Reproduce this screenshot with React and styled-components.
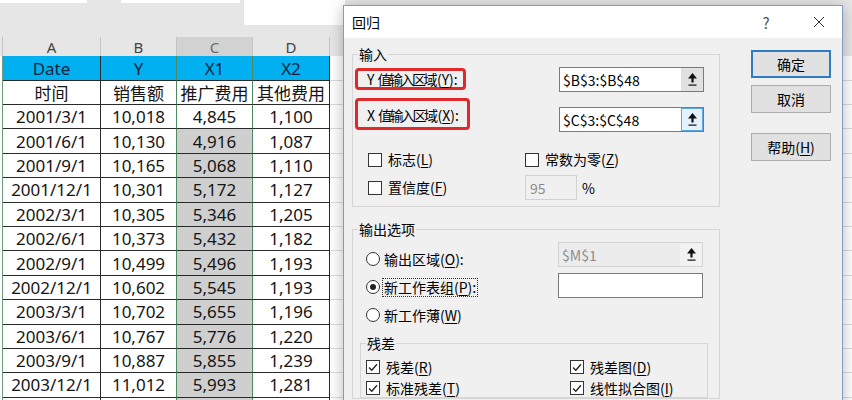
import styled, { createGlobalStyle } from "styled-components";

const GlobalStyle = createGlobalStyle`
  * { box-sizing: border-box; }
  html, body { margin: 0; padding: 0; }
  body {
    width: 852px;
    height: 400px;
    overflow: hidden;
    background: #fff;
    font-family: "Noto Sans", "Noto Sans CJK SC", sans-serif;
  }
  #root { width: 852px; height: 400px; overflow: hidden; }
`;

const Screen = styled.div`
  position: relative;
  width: 852px;
  height: 400px;
  overflow: hidden;
  background: #fff;
`;

/* ---------- spreadsheet behind the dialog ---------- */

const TopStrip = styled.div`
  display: flex;
  align-items: flex-start;
  height: 37px;
  background: #e6e6e6;
`;

const TopBox = styled.div`
  width: ${p => p.$w}px;
  height: ${p => p.$h}px;
  margin-left: ${p => p.$ml || 0}px;
  background: #fff;
`;

const Grid = styled.div`
  display: grid;
  grid-template-columns: 3px 98px 76px 76px 77px 1fr;
  grid-template-rows: 19px 25px 24px repeat(13, 24.4px);
`;

const Stub = styled.div`
  background: ${p => (p.$head ? "#e6e6e6" : "#fff")};
  border-right: 1px solid ${p => (p.$head ? "#c4c4c4" : "#6f9c7e")};
`;

const ColHead = styled.div`
  display: flex;
  align-items: center;
  justify-content: center;
  background: ${p => (p.$sel ? "#d2d2d2" : "#e6e6e6")};
  border-right: 1px solid #c4c4c4;
  color: ${p => (p.$sel ? "#6a6a6a" : "#444")};
  font-size: 15px;
`;

const Cell = styled.div`
  display: flex;
  align-items: center;
  justify-content: center;
  white-space: nowrap;
  font-size: 17px;
  background: ${p =>
    p.$tone === "blue" ? "#00b0f0" : p.$tone === "sel" ? "#cfcfcf" : "#fff"};
  color: ${p => (p.$tone === "blue" ? "#102440" : "#151515")};
  border-right: 1px solid ${p => (p.$edge ? "#4d8a63" : "#2a2a2a")};
  border-bottom: 1px solid #2a2a2a;
`;

const Blank = styled.div`
  background: ${p => (p.$head ? "#e6e6e6" : "#fff")};
  border-bottom: 1px solid ${p => (p.$head ? "#e6e6e6" : "#dadada")};
`;

const rows = [
  ["2001/3/1", "10,018", "4,845", "1,100"],
  ["2001/6/1", "10,130", "4,916", "1,087"],
  ["2001/9/1", "10,165", "5,068", "1,110"],
  ["2001/12/1", "10,301", "5,172", "1,127"],
  ["2002/3/1", "10,305", "5,346", "1,205"],
  ["2002/6/1", "10,373", "5,432", "1,182"],
  ["2002/9/1", "10,499", "5,496", "1,193"],
  ["2002/12/1", "10,602", "5,545", "1,193"],
  ["2003/3/1", "10,702", "5,655", "1,196"],
  ["2003/6/1", "10,767", "5,776", "1,220"],
  ["2003/9/1", "10,887", "5,855", "1,239"],
  ["2003/12/1", "11,012", "5,993", "1,281"],
  ["", "", "", ""],
];

const SheetRow = ({ cells, tone, first }) => (
  <>
    <Stub />
    <Cell $tone={tone}>{cells[0]}</Cell>
    <Cell $tone={tone} $edge>{cells[1]}</Cell>
    <Cell $tone={tone === "blue" || first ? tone : "sel"} $edge>{cells[2]}</Cell>
    <Cell $tone={tone}>{cells[3]}</Cell>
    <Blank />
  </>
);

/* ---------- regression dialog ---------- */

const Dialog = styled.div`
  position: absolute;
  left: 343px;
  top: 5px;
  width: 500px;
  height: 430px;
  display: flex;
  flex-direction: column;
  border: 1px solid #7f9cc4;
  background: #f0f0f0;
  box-shadow: 0 2px 14px rgba(0, 0, 0, 0.28);
  font-family: "Noto Sans CJK SC", "Noto Sans", sans-serif;
  font-size: 14px;
  color: #000;
`;

const TitleBar = styled.div`
  display: flex;
  align-items: center;
  height: 32px;
  padding-left: 8px;
  background: #fff;
  flex: none;
`;

const Title = styled.span`
  flex: 1;
`;

const TitleBtn = styled.div`
  width: ${p => p.$w}px;
  height: 32px;
  margin-right: ${p => p.$mr || 0}px;
  display: flex;
  align-items: center;
  justify-content: center;
  color: #555;
  font-size: 15px;
`;

const Body = styled.div`
  flex: 1;
  display: flex;
  padding: 0 11px 0 8px;
`;

const LeftPane = styled.div`
  width: 368px;
  display: flex;
  flex-direction: column;
`;

const Group = styled.fieldset`
  width: ${p => p.$w}px;
  margin: ${p => p.$mt || 0}px 0 0 ${p => p.$ml || 0}px;
  padding: 0;
  min-width: 0;
  border: 1px solid #d6d6d6;
`;

const Legend = styled.legend`
  margin-left: 5px;
  padding: 0 1px;
  line-height: 18px;
  font-size: 14px;
`;

const InputArea = styled.div`
  padding: 4px 15px 6px 2px;
  display: flex;
  flex-direction: column;
`;

const InputRow = styled.div`
  display: flex;
  align-items: flex-start;
  justify-content: space-between;
  margin-top: ${p => p.$mt || 0}px;
`;

const Marked = styled.div`
  display: flex;
  align-items: center;
  width: ${p => p.$w}px;
  height: ${p => p.$h}px;
  margin-top: ${p => p.$mt || 0}px;
  padding: ${p => p.$pt || 0}px 0 0 9px;
  border: 3px solid #e0292b;
  border-radius: 4px;
  white-space: nowrap;
`;

const Squeeze = styled.span`
  margin-left: 3px;
  letter-spacing: -2.5px;
  margin-right: 2px;
`;

const RefBox = styled.div`
  display: flex;
  width: 145px;
  height: 25px;
  margin-top: ${p => p.$mt || 0}px;
  border: 1px solid ${p => (p.$off ? "#d2d2d2" : "#7a7a7a")};
  background: ${p => (p.$off ? "#ececec" : "#fff")};
`;

const RefText = styled.span`
  flex: 1;
  display: flex;
  align-items: center;
  padding-left: 3px;
  color: ${p => (p.$off ? "#8c8c8c" : "#000")};
`;

const RefBtn = styled.span`
  width: 22px;
  display: flex;
  align-items: center;
  justify-content: center;
  background: ${p => (p.$hot ? "#e5f1fb" : p.$off ? "#f2f2f2" : "#e1e1e1")};
  border: 1px solid ${p => (p.$hot ? "#5aa6e6" : "transparent")};
`;

const CheckGrid = styled.div`
  display: grid;
  grid-template-columns: ${p => p.$col}px auto;
  grid-auto-rows: ${p => p.$row}px;
  row-gap: 3px;
  margin-top: ${p => p.$mt || 0}px;
  padding-left: ${p => p.$pl}px;
`;

const Option = styled.div`
  display: flex;
  align-items: center;
  gap: ${p => p.$gap ?? 4}px;
  height: ${p => p.$h || 18}px;
  white-space: nowrap;
`;

const OptionText = styled.span`
  line-height: 17px;
  padding: 0 1px;
  border: 1px ${p => (p.$focus ? "dotted #333" : "solid transparent")};
`;

const Key = styled.span`
  text-decoration: underline;
  text-underline-offset: 2px;
`;

const Box = styled.span`
  flex: none;
  width: 14px;
  height: 14px;
  display: flex;
  align-items: center;
  justify-content: center;
  border: 1px solid #333;
  background: #fff;
`;

const RadioCircle = styled(Box)`
  border-radius: 50%;
`;

const Dot = styled.span`
  width: 6px;
  height: 6px;
  border-radius: 50%;
  background: #222;
`;

const SmallInput = styled.div`
  width: 52px;
  height: 25px;
  display: flex;
  align-items: center;
  padding-left: 4px;
  border: 1px solid #d2d2d2;
  background: #f0f0f0;
  color: #8c8c8c;
`;

const OutputArea = styled.div`
  display: flex;
`;

const RadioCol = styled.div`
  flex: 1;
  display: flex;
  flex-direction: column;
  padding: 7px 0 0 13px;
`;

const InputCol = styled.div`
  display: flex;
  flex-direction: column;
  gap: 6px;
  padding: 4px 16px 0 0;
`;

const ButtonCol = styled.div`
  width: 80px;
  margin-left: 31px;
  padding-top: 12px;
  display: flex;
  flex-direction: column;
`;

const Btn = styled.button`
  height: 28px;
  margin: ${p => p.$mt || 0}px 0 0;
  padding: 0;
  font: inherit;
  color: #000;
  background: #e1e1e1;
  border: ${p => (p.$main ? "2px solid #2f7bc4" : "1px solid #adadad")};
`;

const Arrow = () => (
  <svg width="11" height="15" viewBox="0 0 11 15">
    <path d="M5.5 1 L10 6.5 H6.6 V10.5 H4.4 V6.5 H1 Z" fill="#111" />
    <rect x="1.5" y="12.5" width="8" height="1.2" fill="#111" />
  </svg>
);

const Close = () => (
  <svg width="12" height="12" viewBox="0 0 12 12">
    <path d="M1 1 L11 11 M11 1 L1 11" stroke="#333" strokeWidth="1" />
  </svg>
);

const Check = ({ on, children, h }) => (
  <Option $h={h}>
    <Box>
      {on && (
        <svg width="10" height="9" viewBox="0 0 10 9">
          <path d="M1 4.5 L3.8 7.3 L9 1.3" fill="none" stroke="#222" strokeWidth="1.3" />
        </svg>
      )}
    </Box>
    <OptionText>{children}</OptionText>
  </Option>
);

const Radio = ({ on, focus, children }) => (
  <Option $h={28} $gap={2}>
    <RadioCircle>{on && <Dot />}</RadioCircle>
    <OptionText $focus={focus}>{children}</OptionText>
  </Option>
);

const RefInput = ({ value, off, hot, mt }) => (
  <RefBox $off={off} $mt={mt}>
    <RefText $off={off}>{value}</RefText>
    {value !== null && (
      <RefBtn $hot={hot} $off={off}>
        <Arrow />
      </RefBtn>
    )}
  </RefBox>
);

export default function App() {
  return (
    <Screen>
      <GlobalStyle />
      <TopStrip>
        <TopBox $w={87} $h={3} />
        <TopBox $w={119} $h={3} $ml={34} />
        <TopBox $w={101} $h={25} $ml={4} />
      </TopStrip>
      <Grid>
        <Stub $head />
        <ColHead>A</ColHead>
        <ColHead>B</ColHead>
        <ColHead $sel>C</ColHead>
        <ColHead>D</ColHead>
        <Blank $head />
        <SheetRow cells={["Date", "Y", "X1", "X2"]} tone="blue" />
        <SheetRow cells={["时间", "销售额", "推广费用", "其他费用"]} first />
        {rows.map((r, i) => (
          <SheetRow key={i} cells={r} first={i === 0} />
        ))}
      </Grid>

      <Dialog>
        <TitleBar>
          <Title>回归</Title>
          <TitleBtn $w={34} $mr={12}>?</TitleBtn>
          <TitleBtn $w={47}>
            <Close />
          </TitleBtn>
        </TitleBar>
        <Body>
          <LeftPane>
            <Group $w={368} $mt={7}>
              <Legend>输入</Legend>
              <InputArea>
                <InputRow>
                  <Marked $w={111} $h={22} $mt={1}>
                    Y<Squeeze>值输入区域</Squeeze>(<Key>Y</Key>):
                  </Marked>
                  <RefInput value="$B$3:$B$48" />
                </InputRow>
                <InputRow $mt={6}>
                  <Marked $w={115} $h={32} $pt={2}>
                    X<Squeeze>值输入区域</Squeeze>(<Key>X</Key>):
                  </Marked>
                  <RefInput value="$C$3:$C$48" hot mt={9} />
                </InputRow>
                <CheckGrid $col={157} $row={25} $mt={15} $pl={13}>
                  <Check h={25}>
                    标志(<Key>L</Key>)
                  </Check>
                  <Check h={25}>
                    常数为零(<Key>Z</Key>)
                  </Check>
                  <Check h={25}>
                    置信度(<Key>F</Key>)
                  </Check>
                  <Option $h={25} $gap={5}>
                    <SmallInput>95</SmallInput>
                    <span>%</span>
                  </Option>
                </CheckGrid>
              </InputArea>
            </Group>

            <Group $w={368} $mt={13}>
              <Legend>输出选项</Legend>
              <OutputArea>
                <RadioCol>
                  <Radio>
                    输出区域(<Key>O</Key>):
                  </Radio>
                  <Radio on focus>
                    新工作表组(<Key>P</Key>):
                  </Radio>
                  <Radio>
                    新工作薄(<Key>W</Key>)
                  </Radio>
                </RadioCol>
                <InputCol>
                  <RefInput value="$M$1" off />
                  <RefInput value={null} />
                </InputCol>
              </OutputArea>
              <Group $w={348} $mt={5} $ml={7}>
                <Legend>残差</Legend>
                <CheckGrid $col={204} $row={18} $mt={6} $pl={5}>
                  <Check on>
                    残差(<Key>R</Key>)
                  </Check>
                  <Check on>
                    残差图(<Key>D</Key>)
                  </Check>
                  <Check on>
                    标准残差(<Key>T</Key>)
                  </Check>
                  <Check on>
                    线性拟合图(<Key>I</Key>)
                  </Check>
                </CheckGrid>
              </Group>
            </Group>
          </LeftPane>

          <ButtonCol>
            <Btn $main>确定</Btn>
            <Btn $mt={7}>取消</Btn>
            <Btn $mt={20}>帮助(<Key>H</Key>)</Btn>
          </ButtonCol>
        </Body>
      </Dialog>
    </Screen>
  );
}
